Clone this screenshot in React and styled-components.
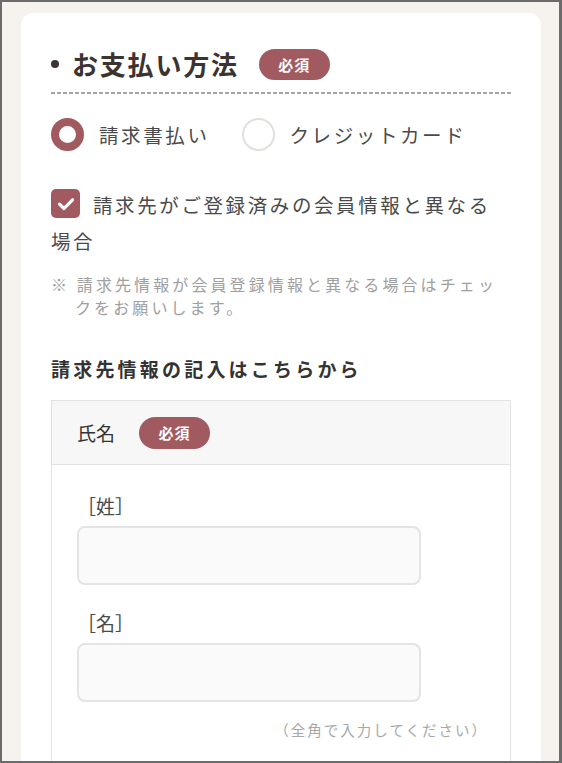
import React from "react";
import styled, { createGlobalStyle } from "styled-components";

const Global = createGlobalStyle`
  html, body { margin: 0; padding: 0; }
  body {
    font-family: "Noto Sans CJK JP", "Noto Sans", sans-serif;
    background: #f6f3ee;
  }
  * { box-sizing: border-box; }
`;

const Frame = styled.div`
  width: 562px;
  height: 763px;
  border: 2px solid #6b6b6b;
  border-right-width: 3px;
  background: #f6f3ee;
  padding: 11px 18px 0 19px;
  overflow: hidden;
`;

const Card = styled.section`
  background: #fff;
  border-radius: 12px 12px 0 0;
  padding: 33px 30px 40px 30px;
  min-height: 800px;
`;

const HeadingRow = styled.div`
  display: flex;
  align-items: center;
  padding-bottom: 10px;
`;

const Bullet = styled.span`
  width: 8px;
  height: 8px;
  border-radius: 50%;
  background: #3b3431;
  margin-right: 13px;
`;

const Heading = styled.h2`
  margin: 0;
  font-size: 26px;
  font-weight: 700;
  color: #3b3431;
  letter-spacing: 1.8px;
  line-height: 36px;
`;

const Badge = styled.span`
  display: inline-flex;
  align-items: center;
  justify-content: center;
  width: ${(p) => p.$w || 71}px;
  height: ${(p) => p.$h || 31}px;
  border-radius: 999px;
  background: #a25a61;
  color: #fff;
  font-size: 15px;
  font-weight: 700;
  letter-spacing: 1px;
  margin-left: ${(p) => p.$ml || 16}px;
`;

const Dashed = styled.div`
  height: 2px;
  background-image: repeating-linear-gradient(
    to right,
    #a8a4a0 0 4px,
    transparent 4px 6px
  );
`;

const RadioGroup = styled.div`
  display: flex;
  align-items: center;
  margin-top: 24px;
`;

const RadioItem = styled.label`
  display: flex;
  align-items: center;
  margin-right: 32px;
  font-size: 19.5px;
  letter-spacing: 2.6px;
  color: #4a4a4a;
`;

const RadioCircle = styled.span`
  width: 33px;
  height: 33px;
  border-radius: 50%;
  background: #fff;
  border: ${(p) => (p.$on ? "8px solid #a25a61" : "2px solid #e3e0dc")};
  margin-right: 15px;
  flex: none;
`;

const CheckLabel = styled.label`
  display: block;
  margin-top: 36px;
  font-size: 19.5px;
  line-height: 36px;
  letter-spacing: 2.6px;
  color: #4a4a4a;
`;

const CheckBox = styled.span`
  display: inline-flex;
  align-items: center;
  justify-content: center;
  width: 29px;
  height: 29px;
  border-radius: 5px;
  background: #a25a61;
  vertical-align: middle;
  margin: -6px 13px 0 0;
  position: relative;
  top: -1px;
`;

const Note = styled.p`
  margin: 14px 0 0 0;
  padding-left: 24px;
  text-indent: -24px;
  font-size: 16px;
  line-height: 23px;
  letter-spacing: 3.1px;
  color: #a0a0a0;
`;

const SubHeading = styled.h3`
  margin: 35px 0 0 0;
  font-size: 19px;
  font-weight: 700;
  letter-spacing: 3.2px;
  line-height: 30px;
  color: #333;
`;

const Table = styled.div`
  margin-top: 16px;
  border: 1px solid #e2e2e2;
`;

const TableHead = styled.div`
  display: flex;
  align-items: center;
  height: 64px;
  padding-left: 25px;
  background: #f7f7f7;
  border-bottom: 1px solid #e2e2e2;
  font-size: 19px;
  color: #333;
`;

const TableBody = styled.div`
  padding: 28px 22px 30px 25px;
`;

const FieldLabel = styled.div`
  font-size: 19px;
  line-height: 26px;
  color: #4a4a4a;
  margin-top: ${(p) => p.$mt || 0}px;
  margin-bottom: 7px;
`;

const Input = styled.input`
  display: block;
  width: 344px;
  height: 59px;
  border: 2px solid #e4e4e4;
  border-radius: 8px;
  background: #fafafa;
  outline: none;
`;

const Hint = styled.div`
  text-align: right;
  margin-top: 17px;
  font-size: 14.5px;
  letter-spacing: 2px;
  color: #a8a8a8;
`;

export default function App() {
  return (
    <>
      <Global />
      <Frame>
        <Card>
          <HeadingRow>
            <Bullet />
            <Heading>お支払い方法</Heading>
            <Badge $ml={20}>必須</Badge>
          </HeadingRow>
          <Dashed />
          <RadioGroup>
            <RadioItem>
              <RadioCircle $on />
              請求書払い
            </RadioItem>
            <RadioItem>
              <RadioCircle />
              クレジットカード
            </RadioItem>
          </RadioGroup>
          <CheckLabel>
            <CheckBox>
              <svg width="18" height="14" viewBox="0 0 18 14">
                <path
                  d="M2.5 7.2 L7 11.5 L15.5 2.8"
                  fill="none"
                  stroke="#fff"
                  strokeWidth="3.2"
                  strokeLinecap="round"
                  strokeLinejoin="round"
                />
              </svg>
            </CheckBox>
            請求先がご登録済みの会員情報と異なる場合
          </CheckLabel>
          <Note>※ 請求先情報が会員登録情報と異なる場合はチェックをお願いします。</Note>
          <SubHeading>請求先情報の記入はこちらから</SubHeading>
          <Table>
            <TableHead>
              氏名
              <Badge $ml={24} $h={32}>必須</Badge>
            </TableHead>
            <TableBody>
              <FieldLabel>［姓］</FieldLabel>
              <Input />
              <FieldLabel $mt={25}>［名］</FieldLabel>
              <Input />
              <Hint>（全角で入力してください）</Hint>
            </TableBody>
          </Table>
        </Card>
      </Frame>
    </>
  );
}
